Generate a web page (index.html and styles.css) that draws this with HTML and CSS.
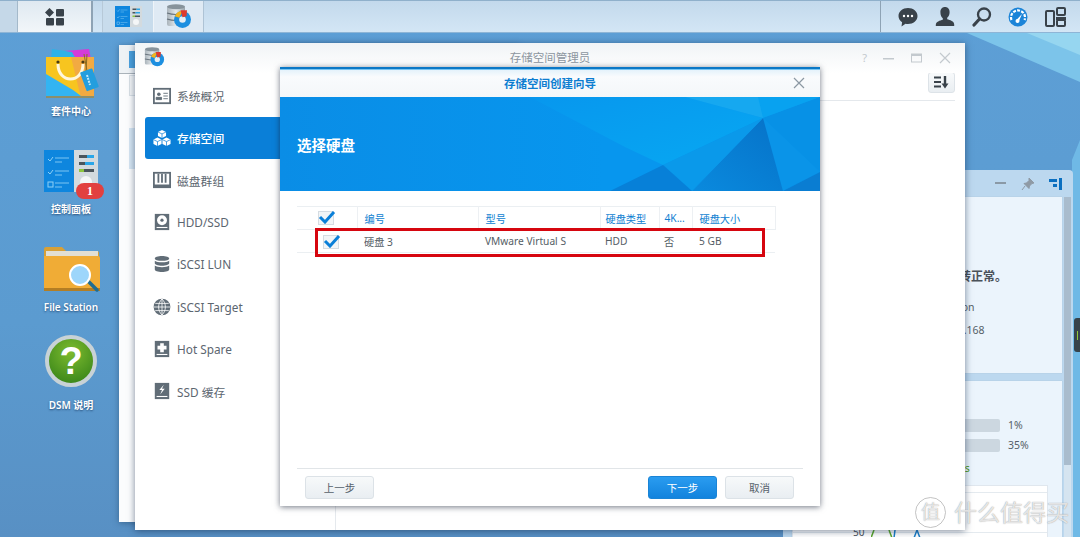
FILE: index.html
```html
<!DOCTYPE html>
<html lang="zh-CN">
<head>
<meta charset="utf-8">
<title>存储空间管理员</title>
<link rel="stylesheet" href="styles.css">
</head>
<body>
<svg class="defs" width="0" height="0">
  <defs>
    <linearGradient id="disk" x1="0" x2="1" y1="0" y2="0"><stop offset="0" stop-color="#aab4bb"/><stop offset=".5" stop-color="#e4e9ec"/><stop offset="1" stop-color="#98a3aa"/></linearGradient>
    <symbol id="storage" viewBox="0 0 26 25">
      <rect x="1" y="2" width="18" height="20" rx="2" fill="url(#disk)"/>
      <ellipse cx="10" cy="2.800" rx="9" ry="2.500" fill="#87939b"/>
      <path d="M1 9q9 3 18 0M1 15q9 3 18 0" fill="none" stroke="#66727b" stroke-width="1.200"/>
      <circle cx="16.500" cy="15.500" r="8.500" fill="#1d8fe0"/>
      <circle cx="16.500" cy="15.500" r="3.300" fill="#e6eef4"/>
      <path d="M16.500 7a8.500 8.500 0 0 0-7.800 5.200l4.600 1.600z" fill="#f3b41d"/>
      <path d="M14.500 6.200h6.500l-.5 6-4 1z" fill="#dd3a2f"/>
    </symbol>
    <symbol id="panel" viewBox="0 0 54 44">
      <rect width="30" height="42" fill="#0e86de"/>
      <rect x="30" width="24" height="42" fill="#d3dade"/>
      <path d="M4 9l2 2 3-4M4 22l2 2 3-4" fill="none" stroke="#8fd0f5" stroke-width="1"/>
      <rect x="4" y="32" width="5" height="5" fill="none" stroke="#8fd0f5"/>
      <path d="M11 8h14M11 12h7M11 21h14M11 25h7M11 33h14M11 37h7" stroke="#7cc5f2" stroke-width="1"/>
      <rect x="35" y="5" width="8" height="3" fill="#4a555c"/><rect x="43" y="5" width="7" height="3" fill="#2aa6e8"/>
      <rect x="35" y="12" width="6" height="3" fill="#4a555c"/><rect x="41" y="12" width="9" height="3" fill="#2aa6e8"/>
      <rect x="35" y="19" width="5" height="3" fill="#8cc63f"/><rect x="40" y="19" width="10" height="3" fill="#4a555c"/>
      <circle cx="42" cy="32" r="6" fill="#f4f6f7"/>
    </symbol>
  </defs>
</svg>

<div class="wave wave-a"></div>
<div class="wave wave-b"></div>
<div class="wave wave-c"></div>

<header class="taskbar">
  <div class="tb-cell tb-stub"></div>
  <div class="tb-cell tb-menu">
    <svg width="20" height="18" viewBox="0 0 20 18"><rect class="dark" x="1.300" y="1.300" width="6.400" height="6.400" transform="rotate(45 4.500 4.500)"/><rect class="dark" x="11" y="1" width="8" height="7.500" rx="1"/><rect class="dark" x="1" y="10" width="8" height="7.500" rx="1"/><rect class="dark" x="11" y="10" width="8" height="7.500" rx="1"/></svg>
  </div>
  <div class="tb-gap"></div>
  <div class="tb-cell tb-app"><svg width="27" height="22"><use href="#panel"/></svg></div>
  <div class="tb-cell tb-app tb-active"><svg width="26" height="25"><use href="#storage"/></svg></div>
  <div class="tb-tray">
    <svg width="20" height="20" viewBox="0 0 20 20"><path class="dark" d="M10 1c5.300 0 9.500 3.500 9.500 8s-4.200 8-9.500 8c-.9 0-1.700-.1-2.500-.3L3.500 19.500l.6-4.300C1.800 13.800.5 11.500.5 9c0-4.500 4.200-8 9.500-8z"/><circle cx="6" cy="9" r="1.200" fill="#fff"/><circle cx="10" cy="9" r="1.200" fill="#fff"/><circle cx="14" cy="9" r="1.200" fill="#fff"/></svg>
    <svg width="20" height="20" viewBox="0 0 20 20"><path class="dark" d="M10 0c3 0 4.600 2.200 4.600 5.200 0 2.200-1 4.500-2.400 5.500v1.500c2.800.8 7 1.800 7 5.300v1.500H.8V18c0-3.500 4.200-4.500 7-5.300v-1.500C6.400 10.200 5.400 7.900 5.400 5.200 5.400 2.200 7 0 10 0z"/></svg>
    <svg width="20" height="20" viewBox="0 0 20 20"><circle cx="12" cy="7.500" r="6" fill="none" stroke="#39424a" stroke-width="2.300"/><path d="M7.500 12L2 18" stroke="#39424a" stroke-width="3.200" stroke-linecap="round"/></svg>
    <svg width="20" height="20" viewBox="0 0 20 20"><circle cx="10" cy="10" r="9.500" fill="#1b84d8"/><path d="M3.500 13a7 7 0 1 1 13 0" fill="none" stroke="#fff" stroke-width="2.200" stroke-dasharray="3 1.200"/><path d="M8 13.500l6-6.500-3.500 8z" fill="#fff"/><circle cx="9.500" cy="14" r="2" fill="#fff"/></svg>
    <svg width="21" height="20" viewBox="0 0 21 20"><rect x="1" y="4" width="8" height="15" rx="1" fill="none" stroke="#39424a" stroke-width="2"/><rect x="12" y="1" width="8" height="7" rx="1" fill="none" stroke="#39424a" stroke-width="2"/><rect class="dark" x="11" y="10" width="10" height="3"/><rect x="12" y="13" width="8" height="6" rx="1" fill="none" stroke="#39424a" stroke-width="2"/></svg>
  </div>
</header>

<nav class="icons">
  <a class="icon">
    <svg class="icon-art" viewBox="0 0 60 54">
      <path d="M11 6l37-3 2 10H11z" fill="#d43bd8"/>
      <path d="M11 3l20 3 4 7H10z" fill="#2fb2e6"/>
      <path d="M5 11h48v40H5z" fill="#f7c51f"/>
      <path d="M30 11h23v41H40z" fill="#f2aa42"/>
      <path d="M5 28l27 16 8 6H5z" fill="#33b4f2"/>
      <path d="M5 50h48v2H5z" fill="#8b8f6c"/>
      <path d="M17 18c0 20 25 20 25 0" fill="none" stroke="#fff7dc" stroke-width="3"/>
      <circle cx="17" cy="16" r="1.600" fill="#4a3a12"/><circle cx="42" cy="16" r="1.600" fill="#4a3a12"/>
      <path d="M43 8l3 17M46 8l-1 17" stroke="#8a6c22" fill="none"/>
      <rect x="42" y="24" width="13" height="20" rx="1" fill="#239ede" transform="rotate(-20 48 34)"/>
      <path d="M46 29l3 10" stroke="#bfe8fb" stroke-width="2" stroke-dasharray="2 1"/>
    </svg>
    <span>套件中心</span>
  </a>
  <a class="icon">
    <svg class="icon-art icon-panel"><use href="#panel"/></svg>
    <b class="badge">1</b>
    <span>控制面板</span>
  </a>
  <a class="icon">
    <svg class="icon-art" viewBox="0 0 60 54">
      <path d="M3 7a2 2 0 0 1 2-2h16l4 4h31a2 2 0 0 1 2 2v10H3z" fill="#d8a036"/>
      <rect x="5" y="9" width="52" height="6" fill="#e2dfd4"/>
      <path d="M3 14h54a2 2 0 0 1 2 2v31a2 2 0 0 1-2 2H5a2 2 0 0 1-2-2z" fill="#f0ac36"/>
      <path d="M3 46h56v3H3z" fill="#b37e24"/>
      <path d="M46 38l10 10" stroke="#1f6d92" stroke-width="3.500" stroke-linecap="round"/>
      <circle cx="39" cy="33" r="10" fill="#9dd6fb" stroke="#fff" stroke-width="2"/>
    </svg>
    <span>File Station</span>
  </a>
  <a class="icon">
    <div class="help"><i>?</i></div>
    <span>DSM 说明</span>
  </a>
</nav>

<section class="widget">
  <div class="widget-head">
    <svg width="12" height="3"><rect width="11" height="2" fill="#8a99a6"/></svg>
    <svg width="14" height="14" viewBox="0 0 14 14"><path d="M8 1l5 5-2 .5-2.500 2.500-.5 2.500-5-5 2.500-.5L8 3.500zM4 9l-3 4" fill="#8f9aa5" stroke="#8f9aa5"/></svg>
    <svg width="13" height="12" viewBox="0 0 13 12"><rect x="0" y="1" width="8" height="3" fill="#0a6fc0"/><rect x="4" y="6" width="4" height="3" fill="#0a6fc0"/><rect x="10" y="0" width="3" height="12" fill="#0a6fc0"/></svg>
  </div>
  <div class="widget-body">
    <div class="widget-cards">
      <div class="card card-status">
        <p class="status">系统运转正常。</p>
        <p class="meta">DSM Version</p>
        <p class="meta meta-ip">192.168.1.168</p>
      </div>
      <div class="card card-res">
        <div class="bar-row"><div class="bar"></div><span>1%</span></div>
        <div class="bar-row"><div class="bar"></div><span>35%</span></div>
        <p class="ok">Normal status</p>
        <div class="chart">
          <span class="tick">50</span>
          <svg class="chart-line" width="60" height="8" viewBox="0 0 60 8"><path d="M0 8L3 0M18 0l3 8" stroke="#5aa62c" stroke-width="1.500" fill="none"/><path d="M23 8l1-8M43 8l3-8 3 8" stroke="#1b7fc9" stroke-width="1.500" fill="none"/></svg>
        </div>
      </div>
    </div>
    <div class="widget-scroll"><div class="thumb"></div></div>
  </div>
</section>
<div class="handle"><i></i></div>

<section class="win-back">
  <div class="back-head"><i class="back-ico"></i></div>
  <div class="back-tool"></div>
  <div class="back-item"></div>
</section>

<section class="win-main">
  <div class="main-head">
    <svg class="main-ico" width="21" height="20"><use href="#storage"/></svg>
    <h2>存储空间管理员</h2>
    <div class="win-ctl">
      <span class="ctl-q">?</span>
      <svg width="12" height="10"><rect y="5" width="11" height="1.500" fill="#c3c9ce"/></svg>
      <svg width="12" height="10"><rect x=".5" y="1" width="10" height="8" fill="none" stroke="#c3c9ce"/><rect y="1" width="11" height="2" fill="#c3c9ce"/></svg>
      <svg width="12" height="12"><path d="M1 1l10 10M11 1L1 11" stroke="#c3c9ce" stroke-width="1.200"/></svg>
    </div>
  </div>
  <div class="main-body">
    <aside class="side">
      <a class="side-item">
        <svg viewBox="0 0 20 20"><rect x="1" y="2" width="18" height="16" fill="none" stroke="#616d77" stroke-width="2"/><circle cx="6.500" cy="8" r="2" fill="#616d77"/><path d="M3.500 14h6v-2.500h-6zM11.500 7h5M11.500 10h5M11.500 13h5" fill="#616d77" stroke="#616d77"/></svg>
        <span>系统概况</span>
      </a>
      <a class="side-item active">
        <svg viewBox="0 0 20 20"><path fill="#fff" d="M10 1l4.500 2.300v4.500L10 10 5.500 7.800V3.300zM5 9.500l4.500 2.300v5L5 19 .5 16.800v-5zM15 9.500l4.500 2.300v5L15 19l-4.500-2.200v-5z"/><path d="M5.500 3.300L10 5.500l4.500-2.200M10 5.500V10M.5 11.800L5 14l4.500-2.200M5 14v5M10.500 11.800L15 14l4.500-2.200M15 14v5" stroke="#0a7fd8" stroke-width=".8" fill="none"/></svg>
        <span>存储空间</span>
      </a>
      <a class="side-item">
        <svg viewBox="0 0 20 20"><rect x="1" y="2" width="18" height="16" fill="none" stroke="#616d77" stroke-width="2"/><path d="M5 3h2v10H5zM9 3h2v10H9zM13 3h2v10h-2z" fill="#616d77"/><path d="M1 15h18v3H1z" fill="#616d77"/></svg>
        <span>磁盘群组</span>
      </a>
      <a class="side-item">
        <svg viewBox="0 0 20 20"><rect x="2" y="1" width="16" height="18" fill="#616d77"/><circle cx="10" cy="8" r="5.500" fill="#fff"/><circle cx="10" cy="8" r="1.800" fill="#616d77"/><rect x="4" y="15.500" width="12" height="1.200" fill="#fff"/></svg>
        <span>HDD/SSD</span>
      </a>
      <a class="side-item">
        <svg viewBox="0 0 20 20"><path fill="#616d77" d="M10 1c4.500 0 8 1.200 8 2.800S14.500 6.500 10 6.500 2 5.400 2 3.800 5.500 1 10 1zM2 6.300c1.500 1.200 4.500 1.800 8 1.800s6.500-.6 8-1.800v3c0 1.500-3.500 2.700-8 2.700s-8-1.200-8-2.700zM2 11.800c1.500 1.200 4.500 1.800 8 1.800s6.500-.6 8-1.800v4.400c0 1.600-3.500 2.800-8 2.800s-8-1.200-8-2.800z"/></svg>
        <span>iSCSI LUN</span>
      </a>
      <a class="side-item">
        <svg viewBox="0 0 20 20"><circle cx="10" cy="10" r="9.300" fill="#616d77"/><path d="M1 10h18M2.500 6h15M2.500 14h15M10 1v18M10 1c-5 5-5 13 0 18M10 1c5 5 5 13 0 18" fill="none" stroke="#fff" stroke-width=".9"/></svg>
        <span>iSCSI Target</span>
      </a>
      <a class="side-item">
        <svg viewBox="0 0 20 20"><rect x="2" y="1" width="16" height="18" fill="#616d77"/><path d="M8 3.500h4v3h3v4h-3v3H8v-3H5v-4h3z" fill="#fff"/><rect x="4" y="15.500" width="12" height="1.200" fill="#fff"/></svg>
        <span>Hot Spare</span>
      </a>
      <a class="side-item">
        <svg viewBox="0 0 20 20"><rect x="2" y="1" width="16" height="18" fill="#616d77"/><path d="M12 3l-5 6h3l-2 5 5-6.500h-3z" fill="#fff"/><rect x="4" y="15.500" width="12" height="1.200" fill="#fff"/></svg>
        <span>SSD 缓存</span>
      </a>
    </aside>
    <div class="main-pane">
      <div class="pane-bar">
        <button class="sort-btn" type="button"><svg width="15" height="13" viewBox="0 0 15 13"><path d="M0 1.500h7M0 6h7M0 10.500h7" stroke="#39424a" stroke-width="1.800"/><path d="M11 0v8" stroke="#39424a" stroke-width="2.400"/><path d="M7.500 7.500h7L11 12.500z" fill="#39424a"/></svg></button>
      </div>
    </div>
  </div>
</section>

<section class="wizard">
  <div class="wiz-title">
    <h1>存储空间创建向导</h1>
    <svg class="wiz-x" width="12" height="12"><path d="M1 1l10 10M11 1L1 11" stroke="#8b98a3" stroke-width="1.200"/></svg>
  </div>
  <div class="banner">
    <svg class="banner-art" viewBox="0 0 540 94" preserveAspectRatio="none">
      <defs>
        <linearGradient id="bandA" x1="0" y1="0" x2="1" y2="1"><stop offset="0" stop-color="#0797ee"/><stop offset="1" stop-color="#07a8f2"/></linearGradient>
        <linearGradient id="darkA" x1="1" y1="0" x2="0" y2="1"><stop offset="0" stop-color="#0672c8"/><stop offset="1" stop-color="#0a8ade"/></linearGradient>
      </defs>
      <polygon points="250,0 405,0 483,21 383,68 345,50" fill="url(#bandA)"/>
      <polygon points="405,0 540,0 483,21" fill="#16a8f0"/>
      <polygon points="478,0 540,0 483,21" fill="#08a2f0"/>
      <polygon points="483,21 540,0 540,75" fill="#0791e6"/>
      <polygon points="483,21 540,75 503,94" fill="#0a94e8"/>
      <polygon points="540,75 540,94 503,94" fill="#0a7dd2"/>
      <polygon points="483,21 503,94 412,94" fill="url(#darkA)"/>
      <polygon points="383,68 483,21 412,94" fill="#0a99ea"/>
      <polygon points="383,68 412,94 330,94" fill="#0780d8"/>
    </svg>
    <h2>选择硬盘</h2>
  </div>
  <div class="wiz-body">
    <table class="grid">
      <colgroup><col class="c0"><col class="c1"><col class="c2"><col class="c3"><col class="c4"><col class="c5"><col></colgroup>
      <thead>
        <tr>
          <th class="chk"><i class="check"><svg width="18" height="14" viewBox="0 0 18 14"><path d="M2 7l5 5 9-10" fill="none" stroke="#0a7fd8" stroke-width="3"/></svg></i></th>
          <th>编号</th><th>型号</th><th>硬盘类型</th><th>4K...</th><th>硬盘大小</th><th></th>
        </tr>
      </thead>
      <tbody>
        <tr>
          <td class="chk chk-row"><i class="check"><svg width="18" height="14" viewBox="0 0 18 14"><path d="M2 7l5 5 9-10" fill="none" stroke="#0a7fd8" stroke-width="3"/></svg></i></td>
          <td>硬盘 3</td><td>VMware Virtual S</td><td>HDD</td><td>否</td><td>5 GB</td><td></td>
        </tr>
      </tbody>
    </table>
    <div class="mark"></div>
  </div>
  <footer class="wiz-foot">
    <button class="btn" type="button">上一步</button>
    <span class="spring"></span>
    <button class="btn btn-primary" type="button">下一步</button>
    <button class="btn" type="button">取消</button>
  </footer>
</section>

<div class="watermark">
  <span class="wm-logo">值</span>
  <span class="wm-text">什么值得买</span>
</div>
</body>
</html>
```

FILE: styles.css
```css
* { box-sizing: border-box; }
html, body { margin: 0; height: 100%; }
body {
  width: 1080px;
  height: 537px;
  overflow: hidden;
  position: relative;
  font-family: "Noto Sans", "Noto Sans CJK SC", sans-serif;
  background: linear-gradient(180deg, #5d9fd6 0%, #5b9bd0 60%, #5890c4 100%);
}
.defs { position: absolute; }
.dark { fill: #39424a; }

.wave { position: absolute; left: 0; top: 0; width: 1080px; height: 537px; }
.wave-a { background: #7cc4ea; clip-path: polygon(967px 33px, 1080px 33px, 1080px 82px); }
.wave-b { background: #96d6f0; clip-path: polygon(1027px 33px, 1080px 33px, 1080px 55px); }
.wave-c { background: #6fb9e6; clip-path: polygon(1072px 160px, 1080px 140px, 1080px 537px, 1072px 537px); }

.taskbar {
  position: relative;
  display: flex;
  height: 33px;
  background: linear-gradient(180deg, #c3d9ec, #d3e6f5);
  border-top: 1px solid #8fb0cb;
  border-bottom: 1px solid #8eb5d6;
}
.tb-cell { display: flex; align-items: center; justify-content: center; height: 100%; }
.tb-stub { width: 18px; background: #c5d8e8; border-right: 1px solid #a4b9ca; }
.tb-menu { width: 75px; background: linear-gradient(180deg, #dfe9f1, #f2f6f9); border-right: 2px solid #8ea3b5; }
.tb-gap { width: 9px; }
.tb-app { width: 51px; border-left: 1px solid #b7c9d8; background: #c8dcec; }
.tb-active { background: #dfeaf4; border-left: 1px solid #eef4f9; border-right: 1px solid #aec3d5; }
.tb-tray {
  margin-left: auto;
  width: 200px;
  display: flex;
  align-items: center;
  justify-content: space-between;
  padding: 0 14px 0 17px;
  border-left: 1px solid #8ea3b5;
}

.icons {
  position: absolute;
  left: 0;
  top: 46px;
  width: 142px;
  display: grid;
  grid-auto-rows: 98px;
}
.icon { position: relative; display: flex; flex-direction: column; align-items: center; }
.icon-art { width: 60px; height: 54px; overflow: visible; }
.icon-panel { width: 54px; height: 44px; margin: 6px 0 4px; }
.icon span {
  margin-top: 3px;
  font-size: 10px;
  font-weight: 600;
  line-height: 16px;
  color: #fff;
  text-shadow: 0 1px 2px rgba(20, 50, 90, .7);
}
.badge {
  position: absolute;
  left: 76px;
  top: 39px;
  width: 28px;
  height: 16px;
  border-radius: 8px;
  background: #e2403f;
  color: #fff;
  font: bold 12px/16px "Liberation Serif", serif;
  text-align: center;
}
.help {
  width: 52px;
  height: 52px;
  margin: -5px 0 7px;
  border-radius: 50%;
  border: 4px solid #c8d2d6;
  background: radial-gradient(circle at 50% 30%, #7dbb2f, #3f8a1b 80%);
  display: flex;
  align-items: center;
  justify-content: center;
}
.help i {
  font: normal bold 38px/1 "Liberation Sans", sans-serif;
  color: #fff;
}

.widget {
  position: absolute;
  left: 783px;
  top: 170px;
  width: 290px;
  height: 380px;
  border-radius: 4px 4px 0 0;
  background: #bcd8ef;
}
.widget-head {
  height: 27px;
  display: flex;
  justify-content: flex-end;
  align-items: center;
  gap: 14px;
  padding-right: 11px;
}
.widget-body { display: flex; gap: 2px; height: 353px; padding-left: 9px; }
.widget-cards { flex: 1; display: flex; flex-direction: column; gap: 8px; }
.card { background: #ebf4fc; box-shadow: 0 0 1px #a7bccd; position: relative; }
.card-status { height: 176px; padding: 70px 0 0 120px; }
.card-status .status { margin: 0 0 12px 11px; font-size: 12px; line-height: 20px; font-weight: 700; color: #4a525a; white-space: nowrap; }
.card-status .meta { margin: 0 0 6px; font-size: 10.500px; line-height: 17px; color: #565f68; white-space: nowrap; }
.card-status .meta-ip { margin-left: 4px; }
.card-res { height: 160px; padding: 34px 0 0 128px; }
.bar-row { display: flex; align-items: center; height: 20px; }
.bar-row span { margin-left: 8px; font-size: 10.500px; color: #565f68; }
.bar { width: 80px; height: 13px; border-radius: 2px; background: #ccd7e0; }
.ok { margin: 5px 0 0 -20px; font-size: 10.500px; line-height: 16px; color: #4a9a18; white-space: nowrap; }
.chart {
  position: absolute;
  left: 0;
  right: 14px;
  top: 104px;
  bottom: 0;
  background: linear-gradient(#e4eaef, #e4eaef) 0 6px / 100% 1px no-repeat, linear-gradient(#e4eaef, #e4eaef) 0 46px / 100% 1px no-repeat, #fff;
  border: 1px solid #e0e7ee;
}
.tick { position: absolute; left: 60px; top: 41px; font-size: 10px; line-height: 10px; color: #4a525a; }
.chart-line { position: absolute; left: 78px; top: 44px; }
.widget-scroll { width: 7px; background: #d5e4f0; margin-right: 2px; }
.thumb { height: 268px; background: #a9bccd; }
.handle {
  position: absolute;
  left: 1074px;
  top: 318px;
  width: 6px;
  height: 34px;
  border-radius: 3px 0 0 3px;
  background: #37434b;
  display: flex;
  align-items: center;
  justify-content: center;
}
.handle i { width: 1px; height: 9px; background: #8fc83a; }

.win-back {
  position: absolute;
  left: 119px;
  top: 45px;
  width: 400px;
  height: 477px;
  background: #fbfcfd;
  box-shadow: 0 1px 6px rgba(30, 60, 90, .5);
}
.back-head { height: 29px; padding: 6px 0 0 10px; background: #eef2f5; border-bottom: 1px solid #aab3ba; }
.back-ico { display: block; width: 22px; height: 17px; background: #4aa0dd; }
.back-tool { height: 21px; width: 30px; margin: 1px 0 0 10px; border: 1px solid #d9e0e6; background: #f2f4f6; }
.back-item { width: 40px; height: 41px; margin: 32px 0 0 10px; background: #d6e6f3; }

.win-main {
  position: absolute;
  left: 135px;
  top: 43px;
  width: 830px;
  height: 487px;
  background: #fff;
  box-shadow: 0 1px 7px rgba(20, 40, 70, .55);
  display: flex;
  flex-direction: column;
}
.main-head {
  height: 30px;
  flex: none;
  display: flex;
  align-items: center;
  position: relative;
  padding: 0 14px 0 9px;
  background: linear-gradient(180deg, #f1f4f6, #fff);
}
.main-head h2 { position: absolute; left: 0; right: 0; top: 6px; margin: 0; text-align: center; font-size: 11.500px; line-height: 18px; font-weight: 400; color: #8d96a0; }
.main-ico { position: relative; top: -1px; }
.win-ctl { margin-left: auto; display: flex; align-items: center; gap: 16px; position: relative; }
.ctl-q { font-size: 11px; line-height: 12px; color: #c3c9ce; }
.main-body { flex: 1; display: flex; min-height: 0; }
.side {
  width: 201px;
  flex: none;
  padding: 1.600px 0 0 10px;
  border-right: 1px solid #e5e9ed;
  display: flex;
  flex-direction: column;
}
.side-item {
  display: flex;
  align-items: center;
  gap: 6px;
  height: 42.200px;
  padding-left: 8px;
  font-size: 11.800px;
  color: #5c6670;
  border-radius: 3px 0 0 3px;
  flex: none;
}
.side-item svg { width: 18px; height: 18px; flex: none; }
.side-item.active { background: #0a7fd8; color: #fff; font-weight: 500; width: 190px; }
.main-pane { flex: 1; padding: 0 10px; }
.pane-bar { height: 28px; border-bottom: 1px solid #e4e8ec; display: flex; justify-content: flex-end; }
.sort-btn {
  width: 27px;
  height: 21px;
  margin-top: -1px;
  padding: 0;
  border: 1px solid #dde3e8;
  border-radius: 3px;
  background: linear-gradient(180deg, #f8fafb, #e9eef2);
  display: flex;
  align-items: center;
  justify-content: center;
}

.wizard {
  position: absolute;
  left: 280px;
  top: 67px;
  width: 540px;
  height: 439px;
  background: #fff;
  border-top: 2px solid #0b78c6;
  box-shadow: 0 1px 6px rgba(20, 30, 50, .6);
  display: flex;
  flex-direction: column;
}
.wiz-title {
  height: 28px;
  flex: none;
  position: relative;
  display: flex;
  align-items: center;
  justify-content: center;
  background: linear-gradient(180deg, #e4f2fb, #f9fbfd 25%, #f4f7f9);
  border-top: 1px solid #79c6f3;
}
.wiz-title h1 { margin: 0; font-size: 11.500px; line-height: 18px; font-weight: 700; color: #0d7ed1; }
.wiz-x { position: absolute; right: 15px; top: 7px; }
.banner {
  height: 94px;
  flex: none;
  position: relative;
  background: linear-gradient(90deg, #0a8de6, #0796ee 60%);
  display: flex;
  align-items: center;
  padding-left: 17px;
}
.banner-art { position: absolute; inset: 0; width: 100%; height: 100%; }
.banner h2 { position: relative; margin: 0; font-size: 14.500px; font-weight: 700; color: #fff; }
.wiz-body { flex: 1; position: relative; padding: 15px 17px 0; }
.grid { width: 478px; border-collapse: collapse; table-layout: fixed; font-size: 10.200px; }
.c0 { width: 60px; } .c1 { width: 121px; } .c2 { width: 122px; } .c3 { width: 59px; } .c4 { width: 33px; } .c5 { width: 83px; }
.grid th, .grid td { padding: 0 0 0 7px; text-align: left; white-space: nowrap; overflow: hidden; }
.grid th { height: 23px; font-weight: 400; color: #0d7ed1; border-top: 1px solid #ebeff2; border-bottom: 1px solid #ebeff2; border-right: 1px solid #edf0f3; }
.grid td { height: 23px; color: #555e66; border-bottom: 1px solid #ebeff2; }
.grid th.chk, .grid td.chk { padding: 0; }
.grid th:last-child { border-right: 0; }
.grid th:nth-child(4), .grid td:nth-child(4) { padding-left: 5px; }
.grid th:nth-child(5), .grid td:nth-child(5) { padding-left: 5px; }
.check {
  display: block;
  width: 16px;
  height: 14px;
  margin-left: 21px;
  background: #f2f5f7;
  border: 1px solid #d5dce2;
  position: relative;
}
.check svg { position: absolute; left: -1px; top: -2px; }
.chk-row .check { margin-left: 26px; margin-top: 2px; }
.mark {
  position: absolute;
  left: 35px;
  top: 37px;
  width: 450px;
  height: 29px;
  border: 3px solid #d6060f;
  pointer-events: none;
}
.wiz-foot {
  height: 38px;
  flex: none;
  margin: 0 17px;
  padding: 7px 9px 0 8px;
  border-top: 1px solid #e1e5e8;
  display: flex;
  gap: 8px;
}
.spring { flex: 1; }
.btn {
  width: 69px;
  height: 23px;
  padding: 0;
  border: 1px solid #dce2e7;
  border-radius: 3px;
  background: linear-gradient(180deg, #f7f9fa, #e9eef2);
  color: #56606a;
  font: 10.500px/20px "Noto Sans", "Noto Sans CJK SC", sans-serif;
}
.btn-primary {
  border-color: #1a84d6;
  background: linear-gradient(180deg, #2a9cf0, #1283dd);
  color: #fff;
}

.watermark {
  position: absolute;
  left: 915px;
  top: 497px;
  display: flex;
  align-items: center;
  gap: 4px;
  color: rgba(255, 255, 255, .75);
  text-shadow: 0 0 1px rgba(90, 90, 90, .7);
}
.wm-logo {
  width: 31px;
  height: 31px;
  border-radius: 50%;
  border: 1px solid rgba(170, 170, 170, .7);
  font-size: 19px;
  line-height: 28px;
  text-align: center;
}
.wm-text { font-size: 23px; line-height: 31px; white-space: nowrap; margin-left: 4px; }
```
